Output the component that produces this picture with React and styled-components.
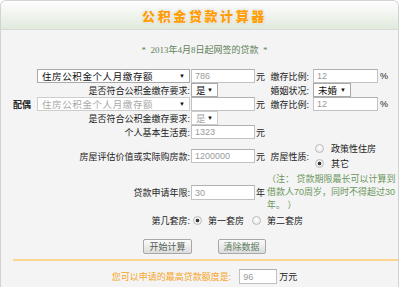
import React from "react";
import styled, { createGlobalStyle } from "styled-components";

const Global = createGlobalStyle`
  html, body { margin: 0; padding: 0; background: #fff; }
  body {
    font-family: "Liberation Sans", "Noto Sans CJK SC", sans-serif;
    font-size: 9px;
    color: #222;
  }
`;

const Panel = styled.div`
  box-sizing: border-box;
  width: 399px;
  height: 287px;
  border: 1px solid #d2d2d2;
  border-bottom: none;
  border-radius: 6px 6px 0 0;
  background: #f4f4f4;
  overflow: hidden;
`;

const Header = styled.div`
  height: 28px;
  border-bottom: 1px solid #d9d9d9;
  border-radius: 5px 5px 0 0;
  background: linear-gradient(#fefefe, #e1eadd);
  display: flex;
  align-items: center;
  justify-content: center;
  padding-left: 10px;
`;

const Title = styled.h1`
  margin: 0;
  font-family: "Noto Sans CJK SC", sans-serif;
  font-weight: 900;
  font-size: 13px;
  letter-spacing: 2.6px;
  color: #ff9c00;
  text-shadow: 0 0 1px #fff, 0 0 2px #fff, 0 0 3px #b9b9b9;
`;

const Body = styled.div`
  padding-left: 10px;
`;

const DateLine = styled.div`
  padding-top: 14px;
  line-height: 12px;
  text-align: center;
  white-space: pre;
  color: #62825a;
  font-family: "Liberation Serif", "Noto Sans CJK SC", serif;
  font-size: 9px;
`;

const Form = styled.div`
  margin-top: 13px;
`;

const Row = styled.div`
  display: grid;
  grid-template-columns: 179px 76px 45px 1fr;
  height: ${(p) => p.h}px;
  align-items: center;
`;

const LabelCell = styled.div`
  display: flex;
  align-items: center;
  justify-content: flex-end;
  gap: 6px;
  white-space: nowrap;
`;

const UnitCell = styled.div`
  display: flex;
  align-items: center;
  padding-left: 1px;
  gap: 1px;
`;

const SideLabel = styled.div`
  text-align: right;
  padding-right: 2px;
  white-space: nowrap;
`;

const SideCell = styled.div`
  display: flex;
  align-items: center;
  padding-left: 2px;
  gap: 2px;
`;

const WideCell = styled.div`
  grid-column: 2 / span 3;
  display: flex;
  align-items: center;
  padding-left: 3px;
`;

const NoteCell = styled.div`
  grid-column: 3 / span 2;
  padding-left: 1px;
  color: #6a965c;
  line-height: 13px;
  white-space: nowrap;
`;

const Spouse = styled.span`
  font-weight: bold;
`;

const TextInput = styled.input`
  box-sizing: border-box;
  width: ${(p) => p.w}px;
  height: ${(p) => p.h || 14}px;
  margin: 0;
  padding: 0 3px;
  border: 1px solid #c2c2c2;
  border-top-color: #b0b0b0;
  background: #fff;
  color: #9a9a9a;
  font-family: "Liberation Sans", sans-serif;
  font-size: 9px;
  outline: none;
`;

const SelectBox = styled.div`
  box-sizing: border-box;
  width: ${(p) => p.w}px;
  height: 14px;
  display: flex;
  align-items: center;
  justify-content: space-between;
  padding: 0 4px 0 4px;
  border: 1px solid ${(p) => (p.off ? "#cdcdcd" : "#a9a9a9")};
  background: #fff;
  color: ${(p) => (p.off ? "#a8a8a8" : "#111")};
  font-size: 9.5px;
  letter-spacing: ${(p) => (p.wide ? "0.6px" : "0")};
  white-space: nowrap;
`;

const Arrow = styled.span`
  font-size: 6px;
  color: #111;
  letter-spacing: 0;
`;

const RadioStack = styled.div`
  display: flex;
  flex-direction: column;
  padding-left: 4px;
`;

const RadioLine = styled.label`
  display: flex;
  align-items: center;
  height: 15px;
  gap: ${(p) => p.gap || 7}px;
  margin-right: ${(p) => p.mr || 0}px;
`;

const Radio = styled.input.attrs({ type: "radio" })`
  appearance: none;
  -webkit-appearance: none;
  margin: 0;
  width: 9px;
  height: 9px;
  border-radius: 50%;
  border: 1px solid #bcbcbc;
  background: radial-gradient(circle at 50% 40%, #fff, #e4e4e4);
  box-sizing: border-box;
  &:checked {
    background: radial-gradient(circle, #3a3a3a 0 1.5px, #f6f6f6 2.2px, #e0e0e0 100%);
  }
`;

const Buttons = styled.div`
  display: flex;
  justify-content: center;
  gap: 26px;
  margin-top: 10px;
`;

const Button = styled.button`
  height: 15px;
  padding: 0 5px;
  margin: 0;
  border: 1px solid #a8a8a8;
  border-radius: 2px;
  background: linear-gradient(#fbfbfb, #dcdcdc);
  color: ${(p) => (p.soft ? "#5f7f5f" : "#556255")};
  font-family: "Noto Sans CJK SC", sans-serif;
  font-size: 9px;
  line-height: 13px;
`;

const Divider = styled.div`
  height: 2px;
  margin: 5px 0 0 2px;
  background: #fcd690;
`;

const Result = styled.div`
  display: flex;
  align-items: center;
  justify-content: center;
  margin-top: 8px;
`;

const ResultLabel = styled.span`
  color: #f6a51f;
  margin-right: 8px;
`;

const ResultUnit = styled.span`
  margin-left: 2px;
`;

export default function App() {
  return (
    <>
      <Global />
      <Panel>
        <Header>
          <Title>公积金贷款计算器</Title>
        </Header>
        <Body>
          <DateLine>{"*  2013年4月8日起网签的贷款  *"}</DateLine>
          <Form>
            <Row h={14}>
              <LabelCell>
                <SelectBox w={153} wide>
                  <span>住房公积金个人月缴存额</span>
                  <Arrow>▼</Arrow>
                </SelectBox>
              </LabelCell>
              <UnitCell>
                <TextInput w={64} readOnly defaultValue="786" />
                <span>元</span>
              </UnitCell>
              <SideLabel>缴存比例:</SideLabel>
              <SideCell>
                <TextInput w={65} readOnly defaultValue="12" />
                <span>%</span>
              </SideCell>
            </Row>
            <Row h={14}>
              <LabelCell>是否符合公积金缴存要求:</LabelCell>
              <UnitCell>
                <SelectBox w={27}>
                  <span>是</span>
                  <Arrow>▼</Arrow>
                </SelectBox>
              </UnitCell>
              <SideLabel>婚姻状况:</SideLabel>
              <SideCell>
                <SelectBox w={38}>
                  <span>未婚</span>
                  <Arrow>▼</Arrow>
                </SelectBox>
              </SideCell>
            </Row>
            <Row h={14}>
              <LabelCell>
                <Spouse>配偶</Spouse>
                <SelectBox w={153} off wide>
                  <span>住房公积金个人月缴存额</span>
                  <Arrow>▼</Arrow>
                </SelectBox>
              </LabelCell>
              <UnitCell>
                <TextInput w={64} readOnly defaultValue="" />
                <span>元</span>
              </UnitCell>
              <SideLabel>缴存比例:</SideLabel>
              <SideCell>
                <TextInput w={65} readOnly defaultValue="12" />
                <span>%</span>
              </SideCell>
            </Row>
            <Row h={14}>
              <LabelCell>是否符合公积金缴存要求:</LabelCell>
              <UnitCell>
                <SelectBox w={27} off>
                  <span>是</span>
                  <Arrow>▼</Arrow>
                </SelectBox>
              </UnitCell>
            </Row>
            <Row h={14}>
              <LabelCell>个人基本生活费:</LabelCell>
              <UnitCell>
                <TextInput w={64} readOnly defaultValue="1323" />
                <span>元</span>
              </UnitCell>
            </Row>
            <Row h={34}>
              <LabelCell>房屋评估价值或实际购房款:</LabelCell>
              <UnitCell>
                <TextInput w={64} readOnly defaultValue="1200000" />
                <span>元</span>
              </UnitCell>
              <SideLabel>房屋性质:</SideLabel>
              <RadioStack>
                <RadioLine>
                  <Radio name="kind" />
                  <span>政策性住房</span>
                </RadioLine>
                <RadioLine>
                  <Radio name="kind" defaultChecked />
                  <span>其它</span>
                </RadioLine>
              </RadioStack>
            </Row>
            <Row h={38}>
              <LabelCell>贷款申请年限:</LabelCell>
              <UnitCell>
                <TextInput w={64} h={15} readOnly defaultValue="30" />
                <span>年</span>
              </UnitCell>
              <NoteCell>
                （注： 贷款期限最长可以计算到
                <br />
                借款人70周岁，同时不得超过30
                <br />
                年。 ）
              </NoteCell>
            </Row>
            <Row h={18}>
              <LabelCell>第几套房:</LabelCell>
              <WideCell>
                <RadioLine gap={6} mr={8}>
                  <Radio name="house" defaultChecked />
                  <span>第一套房</span>
                </RadioLine>
                <RadioLine gap={6}>
                  <Radio name="house" />
                  <span>第二套房</span>
                </RadioLine>
              </WideCell>
            </Row>
          </Form>
          <Buttons>
            <Button>开始计算</Button>
            <Button soft>清除数据</Button>
          </Buttons>
          <Divider />
          <Result>
            <ResultLabel>您可以申请的最高贷款额度是:</ResultLabel>
            <TextInput w={38} h={15} readOnly defaultValue="96" />
            <ResultUnit>万元</ResultUnit>
          </Result>
        </Body>
      </Panel>
    </>
  );
}
